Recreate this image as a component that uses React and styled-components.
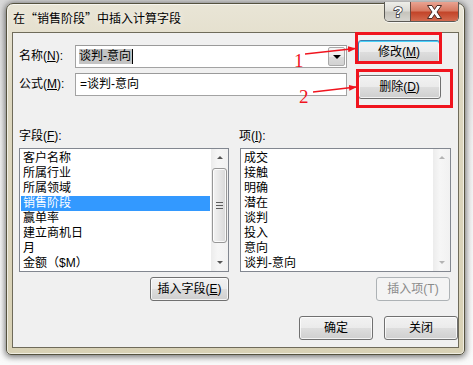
import styled, { createGlobalStyle, css } from 'styled-components';

const Global = createGlobalStyle`
    html, body {
        margin: 0;
        padding: 0;
        background: #ececec;
    }
    * {
        box-sizing: border-box;
    }
`

const font = `"Liberation Sans", "Noto Sans CJK SC", sans-serif`;

const Page = styled.div`
    position: relative;
    width: 473px;
    height: 365px;
    overflow: hidden;
    padding: 3px 0 0 6px;
    background: linear-gradient(180deg, #d9d9d9 0%, #f2f2f2 40%, #fafafa 100%);
    font-family: ${font};
    font-size: 12px;
    color: #000;
`

const Window = styled.div`
    width: 459px;
    height: 352px;
    display: flex;
    flex-direction: column;
    border: 1px solid #55523f;
    border-radius: 7px 7px 5px 5px;
    background: linear-gradient(180deg, #e9e5d6 0%, #ddd7c0 25%, #d8d1b5 100%);
    box-shadow: 0 1px 6px 1px rgba(0, 0, 0, 0.55), inset 0 0 0 1px rgba(255, 255, 255, 0.6);
`

const TitleBar = styled.div`
    height: 28px;
    display: flex;
    align-items: flex-start;
    padding-left: 6px;

    .title {
        font-family: "Noto Sans CJK SC", sans-serif;
        line-height: 28px;
        text-shadow: 0 0 6px rgba(255, 255, 255, 0.9);
    }
`

const Caption = styled.div`
    margin-left: auto;
    margin-right: 5px;
    margin-top: -2px;
    display: flex;
    height: 20px;
    border: 1px solid #5b5a55;
    border-top: none;
    border-radius: 0 0 5px 5px;
    overflow: hidden;
    box-shadow: 0 1px 0 rgba(255, 255, 255, 0.7);
`

const CapButton = styled.div`
    height: 100%;
    display: flex;
    align-items: center;
    justify-content: center;
    width: ${props => props.$w}px;

    ${props => props.$close ? css`
        background: linear-gradient(180deg, #e9a391 0%, #d77a62 45%, #c3452a 55%, #d36a4e 100%);
        border-left: 1px solid #6e4a40;
    ` : css`
        background: linear-gradient(180deg, #eeeeea 0%, #dcdbd5 45%, #c6c4bc 55%, #d6d5cf 100%);
    `}
`

const Client = styled.div`
    flex: 1;
    margin: 0 5px 6px 5px;
    border: 1px solid #6f6b5a;
    background: #f0f0f0;
    padding: 7px 7px 0 6px;
`

const Row = styled.div`
    display: flex;
    align-items: flex-start;
    margin-top: ${props => props.$top || 0}px;
`

const Label = styled.div`
    width: ${props => props.$w || 56}px;
    line-height: ${props => props.$lh || 23}px;
    margin-top: ${props => props.$top || 0}px;
    margin-left: ${props => props.$left || 0}px;
    white-space: nowrap;

    u {
        text-underline-offset: 1px;
    }
`

const Field = styled.div`
    width: 272px;
    height: 23px;
    margin-top: ${props => props.$top || 0}px;
    display: flex;
    align-items: stretch;
    background: #fff;
    border: 1px solid #a3a3a3;
    border-top-color: #9a9a9a;
    padding-left: ${props => props.$pad || 3}px;

    .value {
        flex: 1;
        display: flex;
        align-items: center;
        line-height: 15px;
    }
`

const Selected = styled.span`
    background: #c4c4c4;
    line-height: 15px;
    padding-right: 1px;
`

const Caret = styled.span`
    display: inline-block;
    width: 1px;
    height: 15px;
    background: #000;
`

const DropButton = styled.div`
    width: 17px;
    margin: 1px;
    border: 1px solid #a9a9a9;
    border-radius: 2px;
    background: linear-gradient(180deg, #f6f6f6 0%, #ececec 50%, #dcdcdc 50%, #d2d2d2 100%);
    display: flex;
    align-items: center;
    justify-content: center;

    &::after {
        content: '';
        border-left: 4px solid transparent;
        border-right: 4px solid transparent;
        border-top: 4px solid #000;
    }
`

const Button = styled.div`
    width: ${props => props.$w}px;
    height: ${props => props.$h || 24}px;
    margin-top: ${props => props.$top || 0}px;
    margin-left: ${props => props.$left || 0}px;
    margin-right: ${props => props.$right || 0}px;
    display: flex;
    align-items: center;
    justify-content: center;
    border: 1px solid #707070;
    border-radius: 3px;
    background: linear-gradient(180deg, #f2f2f2 0%, #ebebeb 48%, #dddddd 52%, #cfcfcf 100%);
    box-shadow: inset 0 0 0 1px rgba(255, 255, 255, 0.75);
    line-height: 15px;
    white-space: nowrap;

    u {
        text-underline-offset: 1px;
    }

    ${props => props.$default && css`
        border-color: #3c7fb1;
        box-shadow: inset 0 1px 0 #48d1f8, inset 0 0 0 1px rgba(255, 255, 255, 0.6);
    `}

    ${props => props.$disabled && css`
        border-color: #adb2b5;
        background: #f4f4f4;
        box-shadow: none;
        color: #8a8a8a;
    `}
`

const Lower = styled.div`
    display: flex;
    gap: 11px;
    margin-top: 30px;
`

const Column = styled.div`
    width: ${props => props.$w}px;
    display: flex;
    flex-direction: column;
    align-items: flex-start;
`

const ListBox = styled.div`
    margin-top: 4px;
    width: 100%;
    height: 124px;
    display: flex;
    background: #fff;
    border: 1px solid #828790;
`

const Items = styled.div`
    flex: 1;
    padding: 2px 1px 1px 1px;
`

const Item = styled.div`
    height: 15px;
    line-height: 15px;
    padding-left: 2px;
    white-space: nowrap;
    ${props => props.$active && css`
        background: #3399ff;
        color: #fff;
    `}
`

const ScrollBar = styled.div`
    width: 17px;
    display: flex;
    flex-direction: column;
    align-items: center;
    background: linear-gradient(90deg, #ececec, #f6f6f6 40%, #f1f1f1);
`

const Arrow = styled.div`
    height: 17px;
    width: 100%;
    display: flex;
    align-items: center;
    justify-content: center;

    &::after {
        content: '';
        border-left: 3px solid transparent;
        border-right: 3px solid transparent;
        ${props => props.$up
            ? `border-bottom: 3px solid ${props.$dim ? '#b4b4b4' : '#555'};`
            : `border-top: 3px solid ${props.$dim ? '#b4b4b4' : '#555'};`}
    }
`

const Track = styled.div`
    flex: 1;
    width: 100%;
    padding: 2px 1px;
`

const Thumb = styled.div`
    height: 75px;
    border: 1px solid #979797;
    border-radius: 3px;
    background: linear-gradient(90deg, #f3f3f3 0%, #e6e6e6 50%, #d8d8d8 100%);
    box-shadow: inset 0 0 0 1px rgba(255, 255, 255, 0.8);
    display: flex;
    flex-direction: column;
    align-items: center;
    justify-content: center;
    gap: 2px;

    span {
        width: 7px;
        height: 1px;
        background: #5d5d5d;
    }
`

const ButtonRow = styled.div`
    align-self: stretch;
    display: flex;
    justify-content: flex-end;
    margin-top: 5px;
`

const Footer = styled.div`
    display: flex;
    justify-content: flex-end;
    gap: 11px;
    margin-top: 15px;
    width: 439px;
`

const Marks = styled.svg`
    position: absolute;
    left: 0;
    top: 0;
    pointer-events: none;
`

function List({ items, active, thumb }) {
    return (
        <ListBox>
            <Items>
                {items.map((t, i) => (
                    <Item key={t} $active={i === active}>{t}</Item>
                ))}
            </Items>
            <ScrollBar>
                <Arrow $up $dim={!thumb} />
                <Track>
                    {thumb && (
                        <Thumb>
                            <span /><span /><span />
                        </Thumb>
                    )}
                </Track>
                <Arrow $dim={!thumb} />
            </ScrollBar>
        </ListBox>
    )
}

const fields = ['客户名称', '所属行业', '所属领域', '销售阶段', '赢单率', '建立商机日', '月', '金额（$M）'];
const values = ['成交', '接触', '明确', '潜在', '谈判', '投入', '意向', '谈判-意向'];

export default function App() {
    return (
        <Page>
            <Global />
            <Window>
                <TitleBar>
                    <span className='title'>在“销售阶段”中插入计算字段</span>
                    <Caption>
                        <CapButton $w={25}>
                            <svg width="12" height="15" viewBox="0 0 12 15">
                                <text x="6" y="13" textAnchor="middle" fontFamily="Liberation Sans, sans-serif" fontWeight="bold" fontSize="15" fill="#fff" stroke="#3c3c44" strokeWidth="1.6" paintOrder="stroke">?</text>
                            </svg>
                        </CapButton>
                        <CapButton $w={48} $close>
                            <svg width="17" height="14" viewBox="0 0 17 14">
                                <path d="M1.5 0.5 L6 0.5 L8.5 4.5 L11 0.5 L15.5 0.5 L11 7 L15.5 13.5 L11 13.5 L8.5 9.5 L6 13.5 L1.5 13.5 L6 7 Z" fill="#fff" stroke="#4a2a24" strokeWidth="1" strokeLinejoin="round" />
                            </svg>
                        </CapButton>
                    </Caption>
                </TitleBar>
                <Client>
                    <Row>
                        <Label $top={5}>名称(<u>N</u>):</Label>
                        <Field $top={5}>
                            <div className='value'>
                                <Selected>谈判-意向</Selected>
                                <Caret />
                            </div>
                            <DropButton />
                        </Field>
                        <Button $w={82} $left={11} $default>修改(<u>M</u>)</Button>
                    </Row>
                    <Row $top={5}>
                        <Label>公式(<u>M</u>):</Label>
                        <Field $pad={4}>
                            <div className='value'>=谈判-意向</div>
                        </Field>
                        <Button $w={83} $left={11} $top={2}>删除(<u>D</u>)</Button>
                    </Row>
                    <Lower>
                        <Column $w={211}>
                            <Label $lh={15}>字段(<u>F</u>):</Label>
                            <List items={fields} active={3} thumb />
                            <ButtonRow>
                                <Button $w={79}>插入字段(<u>E</u>)</Button>
                            </ButtonRow>
                        </Column>
                        <Column $w={212}>
                            <Label $lh={15} $left={-1}>项(<u>I</u>):</Label>
                            <List items={values} active={-1} />
                            <ButtonRow>
                                <Button $w={74} $right={1} $disabled>插入项(T)</Button>
                            </ButtonRow>
                        </Column>
                    </Lower>
                    <Footer>
                        <Button $w={74}>确定</Button>
                        <Button $w={74}>关闭</Button>
                    </Footer>
                </Client>
            </Window>
            <Marks width="473" height="365" viewBox="0 0 473 365">
                <defs>
                    <marker id="head" markerWidth="8" markerHeight="6" refX="7" refY="3" orient="auto" markerUnits="userSpaceOnUse">
                        <path d="M0 0 L8 3 L0 6 Z" fill="#f0141e" />
                    </marker>
                </defs>
                <rect x="356.5" y="33.5" width="84" height="29" fill="none" stroke="#f0141e" strokeWidth="3" />
                <rect x="357.5" y="70.5" width="94" height="36" fill="none" stroke="#f0141e" strokeWidth="3" />
                <line x1="305" y1="54" x2="355" y2="48.5" stroke="#f0141e" strokeWidth="1.5" markerEnd="url(#head)" />
                <line x1="313" y1="92" x2="356" y2="87" stroke="#f0141e" strokeWidth="1.5" markerEnd="url(#head)" />
                <text x="294" y="67" fontFamily="Liberation Serif, serif" fontSize="19" fill="#f0141e">1</text>
                <text x="299" y="103" fontFamily="Liberation Serif, serif" fontSize="19" fill="#f0141e">2</text>
            </Marks>
        </Page>
    )
}
